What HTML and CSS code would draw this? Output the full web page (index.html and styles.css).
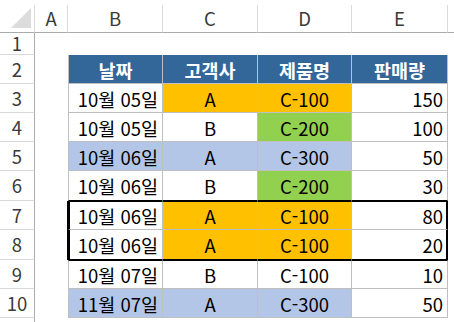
FILE: index.html
```html
<!DOCTYPE html>
<html lang="ko">
<head>
<meta charset="utf-8">
<link rel="stylesheet" href="styles.css">
</head>
<body>
<div class="sheet">
  <div class="ch corner"><span class="tri"></span></div>
  <div class="ch">A</div>
  <div class="ch">B</div>
  <div class="ch">C</div>
  <div class="ch">D</div>
  <div class="ch">E</div>
  <div class="ch last"></div>

  <div class="rh">1</div>
  <div class="blank span"></div>

  <div class="rh">2</div>
  <div class="blank"></div>
  <div class="c hd first top">날짜</div>
  <div class="c hd top">고객사</div>
  <div class="c hd top">제품명</div>
  <div class="c hd top">판매량</div>
  <div class="blank"></div>

  <div class="rh">3</div>
  <div class="blank"></div>
  <div class="c r first">10월 05일</div>
  <div class="c m org">A</div>
  <div class="c m org">C-100</div>
  <div class="c r">150</div>
  <div class="blank"></div>

  <div class="rh">4</div>
  <div class="blank"></div>
  <div class="c r first">10월 05일</div>
  <div class="c m">B</div>
  <div class="c m grn">C-200</div>
  <div class="c r">100</div>
  <div class="blank"></div>

  <div class="rh">5</div>
  <div class="blank"></div>
  <div class="c r first blu">10월 06일</div>
  <div class="c m blu">A</div>
  <div class="c m blu">C-300</div>
  <div class="c r">50</div>
  <div class="blank"></div>

  <div class="rh">6</div>
  <div class="blank"></div>
  <div class="c r first above">10월 06일</div>
  <div class="c m above">B</div>
  <div class="c m grn above">C-200</div>
  <div class="c r above">30</div>
  <div class="blank"></div>

  <div class="rh">7</div>
  <div class="blank selA"></div>
  <div class="c r first selL selT">10월 06일</div>
  <div class="c m org selT">A</div>
  <div class="c m org selT">C-100</div>
  <div class="c r selT selR">80</div>
  <div class="blank"></div>

  <div class="rh">8</div>
  <div class="blank selA"></div>
  <div class="c r first selL selB">10월 06일</div>
  <div class="c m org selB">A</div>
  <div class="c m org selB">C-100</div>
  <div class="c r selB selR">20</div>
  <div class="blank"></div>

  <div class="rh">9</div>
  <div class="blank"></div>
  <div class="c r first below">10월 07일</div>
  <div class="c m below">B</div>
  <div class="c m below">C-100</div>
  <div class="c r below">10</div>
  <div class="blank"></div>

  <div class="rh">10</div>
  <div class="blank"></div>
  <div class="c r first blu">11월 07일</div>
  <div class="c m blu">A</div>
  <div class="c m blu">C-300</div>
  <div class="c r">50</div>
  <div class="blank"></div>

  <div class="rh"></div>
  <div class="blank span"></div>
</div>
</body>
</html>
```

FILE: styles.css
```css
* { box-sizing: border-box; }
html, body { margin: 0; padding: 0; background: #fff; }
body {
  font-family: "Noto Sans CJK KR", "Open Sans", sans-serif;
  font-size: 18.5px;
  color: #000;
  width: 454px;
  height: 322px;
  overflow: hidden;
}
.sheet {
  padding-top: 5px;
  display: grid;
  grid-template-columns: 35px 33px 95px 95px 94px 96px 1fr;
  grid-template-rows: 28px 22px 29px 29px 29px 29px 30px 29px 30px 29px 29px 10px;
}
.ch {
  display: flex;
  align-items: center;
  justify-content: center;
  color: #3a3a3a;
  border-right: 1px solid #dadada;
  border-bottom: 1px solid #ababab;
  line-height: 1;
}
.ch.last { border-right: none; }
.corner { position: relative; }
.tri {
  position: absolute;
  right: 3px;
  bottom: 4px;
  width: 0;
  height: 0;
  border-left: 20px solid transparent;
  border-bottom: 20px solid #dcdcdc;
}
.rh {
  display: flex;
  align-items: center;
  justify-content: center;
  color: #3a3a3a;
  border-right: 1px solid #ababab;
  border-bottom: 1px solid #dadada;
  line-height: 1;
}
.span { grid-column: 2 / 8; }
.c {
  display: flex;
  align-items: center;
  border-right: 1px solid #bfbfbf;
  border-bottom: 1px solid #bfbfbf;
  line-height: 1;
  padding-top: 2px;
}
.first { border-left: 1px solid #bfbfbf; }
.r { justify-content: flex-end; padding-right: 4px; }
.m { justify-content: center; }
.hd {
  background: #336699;
  color: #fff;
  font-weight: 700;
  justify-content: center;
}
.org { background: #ffc000; }
.grn { background: #92d050; }
.blu { background: #b4c6e7; }
.above { border-bottom-color: #000; }
.selT { border-top: 1px solid #000; }
.selB { border-bottom: 1px solid #000; }
.below { border-top: 1px solid #000; }
.selL { border-left: 2px solid #000; }
.selA { border-right: 1px solid #000; }
.selR { border-right: 2px solid #000; padding-right: 3px; }
```
